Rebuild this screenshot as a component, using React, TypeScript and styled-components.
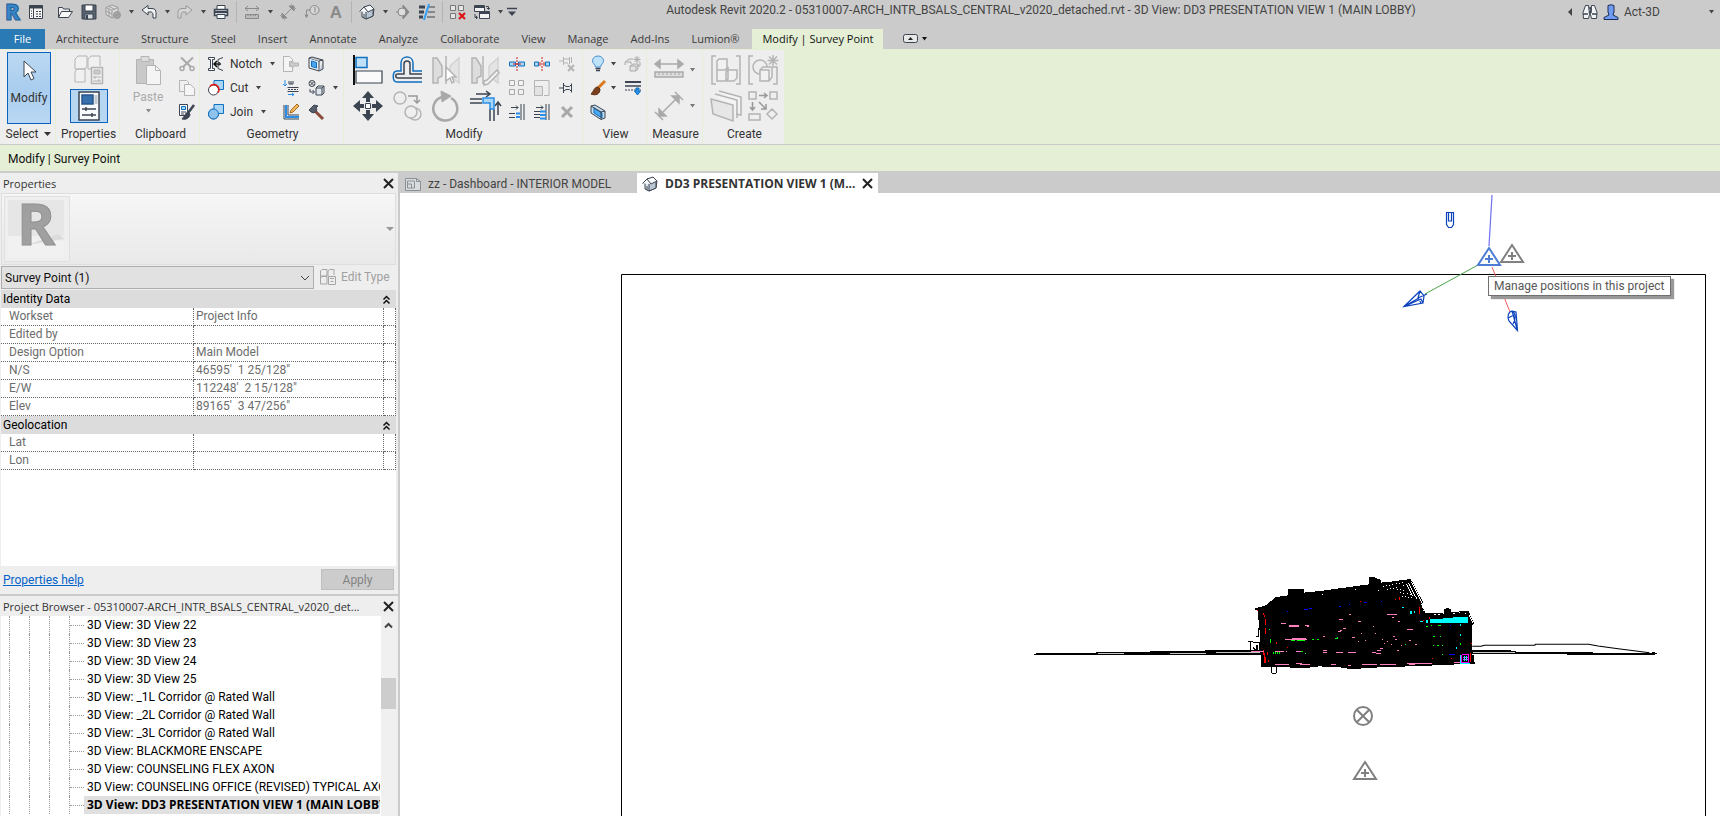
import React, { ReactNode } from 'react';
import styled, { createGlobalStyle, css } from 'styled-components';

const INK = '#3b4450';
const DIM = '#b4b4b4';
const BLUE = '#0f6fc0';
const SKY = '#a9d6f7';

const GlobalStyle = createGlobalStyle`
  * { box-sizing: border-box; }
  body { margin: 0; background: #cbcbcb; font: 12px/18px Roboto, "Open Sans", sans-serif; color: #333; }
  button, select { font: inherit; color: inherit; }
`;

/* ---------- shell ---------- */

const Window = styled.div`
  display: flex;
  flex-direction: column;
  height: 100vh;
  min-height: 640px;
  overflow: hidden;
`;

const TitleBar = styled.header`
  display: flex;
  height: 29px;
  padding-bottom: 5px;
  background: #cbcbcb;
`;

const QuickAccess = styled.nav`
  display: flex;
  align-items: center;
`;

const SlotButton = styled.button<{ $w?: number; $gap?: number }>`
  display: flex;
  align-items: center;
  justify-content: center;
  width: ${(p) => p.$w ?? 24}px;
  height: 24px;
  margin: 0 ${(p) => p.$gap ?? 0}px 0 0;
  padding: 0;
  border: 0;
  background: none;
`;

const Separator = styled.span`
  width: 1px;
  height: 22px;
  margin: 0 3px;
  background: #b3b3b3;
`;

const WindowTitle = styled.h1`
  flex: 1;
  margin: 0;
  font-size: 12px;
  font-weight: 400;
  line-height: 20px;
  text-align: center;
  white-space: nowrap;
  color: #444;
`;

const Account = styled.div`
  display: flex;
  align-items: center;
  width: 156px;
  color: #444;
`;

const UserButton = styled.button`
  display: flex;
  flex: 1;
  align-items: center;
  gap: 5px;
  padding: 0;
  border: 0;
  background: none;
`;

const TabStrip = styled.nav`
  display: flex;
  height: 20px;
  background: #cbcbcb;
  font-family: "Open Sans", sans-serif;
  font-size: 11px;
`;

const RibbonTab = styled.button<{ $kind?: 'file' | 'active' }>`
  padding: 0 11px;
  border: 0;
  background: none;
  white-space: nowrap;
  color: #3a3a3a;
  ${(p) => p.$kind === 'file' && css`
    width: 45px;
    background: #2a7ab5;
    color: #fff;
  `}
  ${(p) => p.$kind === 'active' && css`
    padding: 0 10px;
    margin-left: 2px;
    background: #e4efd5;
    color: #111;
  `}
`;

const RibbonToggle = styled.button`
  display: flex;
  align-items: center;
  gap: 3px;
  margin-left: 20px;
  padding: 0;
  border: 0;
  background: none;
`;

const Ribbon = styled.div`
  display: flex;
  height: 96px;
  padding-top: 1px;
  border-bottom: 1px solid #cbcbcb;
  background: #e4efd5;
`;

const RibbonPanel = styled.section<{ $w: number }>`
  display: flex;
  flex-direction: column;
  width: ${(p) => p.$w}px;
  padding-top: 2px;
  border-right: 1px solid #e4efd5;
  background: #eeeeee;
`;

const PanelBody = styled.div<{ $pad?: number }>`
  display: flex;
  height: 72px;
  padding-left: ${(p) => p.$pad ?? 0}px;
`;

const PanelLabel = styled.div`
  display: flex;
  align-items: center;
  justify-content: center;
  gap: 6px;
  height: 20px;
  padding-left: 2px;
`;

const Stack = styled.div`
  display: flex;
  flex-direction: column;
`;

const GeometryStack = styled(Stack)`
  width: 70px;
`;

const ViewStack = styled(Stack)`
  width: 31px;
`;

const BigGrid = styled.div<{ $cols: number; $cell: number }>`
  display: grid;
  grid-template-columns: repeat(${(p) => p.$cols}, ${(p) => p.$cell}px);
  grid-auto-rows: 36px;
`;

const SmallGrid = styled.div<{ $cols: number }>`
  display: grid;
  grid-template-columns: repeat(${(p) => p.$cols}, 25px);
  grid-auto-rows: 24px;
`;

const ToolButton = styled.button<{ $start?: boolean }>`
  display: flex;
  align-items: center;
  justify-content: ${(p) => (p.$start ? 'flex-start' : 'center')};
  min-width: 24px;
  min-height: 24px;
  padding: 0;
  border: 0;
  background: none;
`;

const MidArrow = styled.button`
  display: flex;
  align-items: center;
  align-self: center;
  margin-left: 5px;
  padding: 0;
  border: 0;
  background: none;
`;

const SelectTool = styled.button`
  display: flex;
  flex-direction: column;
  align-items: center;
  gap: 7px;
  width: 44px;
  height: 72px;
  padding: 7px 0 0;
  border: 1px solid #0a64bd;
  background: linear-gradient(#bcd9f2, #a9cdee 50%, #b9d8f3);
`;

const PropertiesTool = styled.button`
  display: flex;
  align-items: center;
  justify-content: center;
  width: 38px;
  height: 34px;
  padding: 0;
  border: 1px solid #0a64bd;
  background: #b7d6f2;
`;

const TypeTool = styled.button`
  display: flex;
  justify-content: center;
  width: 38px;
  height: 37px;
  padding: 3px 0 0;
  border: 0;
  background: none;
`;

const PasteTool = styled.button`
  display: flex;
  flex-direction: column;
  align-items: center;
  gap: 4px;
  width: 52px;
  padding: 3px 0 0;
  border: 0;
  background: none;
  color: #aaa;
  line-height: 16px;
`;

const TextTool = styled.button`
  display: flex;
  align-items: center;
  gap: 6px;
  height: 24px;
  padding: 0;
  border: 0;
  background: none;
  & > svg:last-child { margin-left: 2px; }
`;

const DropButton = styled.button<{ $tall?: boolean }>`
  display: flex;
  align-items: center;
  gap: ${(p) => (p.$tall ? 6 : 5)}px;
  height: ${(p) => (p.$tall ? 36 : 24)}px;
  padding: 0;
  border: 0;
  background: none;
`;

const OptionsBar = styled.div`
  height: 28px;
  padding-left: 8px;
  border-bottom: 2px solid #cbcbcb;
  background: #e4efd5;
  line-height: 28px;
  color: #111;
`;

const Workspace = styled.div`
  display: flex;
  flex: 1;
  min-height: 0;
`;

/* ---------- side palettes ---------- */

const Sidebar = styled.aside`
  display: flex;
  flex: none;
  flex-direction: column;
  width: 400px;
  border-right: 2px solid #cbcbcb;
  background: #eeeeee;
`;

const PaletteHeader = styled.header`
  display: flex;
  flex: none;
  align-items: center;
  justify-content: space-between;
  height: 20px;
  padding: 1px 4px 0 3px;
  font-family: "Open Sans", sans-serif;
  font-size: 11px;
  white-space: nowrap;
`;

const PaletteTitle = styled.h2`
  margin: 0;
  font: inherit;
  color: #333;
`;

const CloseButton = styled.button`
  display: flex;
  padding: 0;
  border: 0;
  background: none;
`;

const TypePreview = styled.div`
  display: flex;
  align-items: center;
  justify-content: space-between;
  height: 72px;
  margin: 0 2px 0 1px;
  padding: 0 1px 0 2px;
  border: 1px solid #dedede;
  background: linear-gradient(#f6f6f6, #e9e9e9);
`;

const Thumb = styled.div`
  width: 66px;
  height: 66px;
  border: 1px solid #e0e0e0;
  background: #efefef;
`;

const TypeRow = styled.div`
  display: flex;
  align-items: center;
  gap: 6px;
  height: 25px;
  padding: 1px 0 1px 1px;
`;

const SelectWrap = styled.label`
  display: grid;
  align-items: center;
  width: 313px;
  height: 23px;
  & > * { grid-area: 1 / 1; }
  & > svg { justify-self: end; margin-right: 4px; pointer-events: none; }
`;

const TypeSelect = styled.select`
  width: 100%;
  height: 23px;
  padding: 0 3px;
  border: 1px solid #adadad;
  border-radius: 0;
  background: #e1e1e1;
  color: #111;
  appearance: none;
`;

const EditType = styled.button`
  display: flex;
  align-items: center;
  gap: 5px;
  padding: 0 0 2px;
  border: 0;
  background: none;
  color: #a0a0a0;
`;

const PropertyArea = styled.div`
  flex: 1;
  min-height: 0;
  margin: 0 2px 0 1px;
  overflow: hidden;
  background: #fff;
`;

const PropertyTable = styled.table`
  width: 100%;
  border-spacing: 0;
  table-layout: fixed;
  color: #6d6d6d;
`;

const NameCol = styled.col`
  width: 193px;
`;

const GutterCol = styled.col`
  width: 12px;
`;

const cell = css`
  height: 18px;
  border-right: 1px dotted #666;
  border-bottom: 1px dotted #666;
  line-height: 16px;
  vertical-align: top;
  white-space: pre;
`;

const Cell = styled.td`
  ${cell}
  padding: 0 0 0 2px;
`;

const NameCell = styled.th`
  ${cell}
  padding: 0 0 0 8px;
  font-weight: 400;
  text-align: left;
`;

const Category = styled.th`
  height: 18px;
  padding: 0;
  background: #dcdcdc;
  font-weight: 400;
`;

const CategoryToggle = styled.button`
  display: flex;
  align-items: center;
  justify-content: space-between;
  width: 100%;
  height: 18px;
  padding: 0 5px 0 2px;
  border: 0;
  background: none;
  color: #000;
`;

const PaletteFooter = styled.footer`
  display: flex;
  flex: none;
  align-items: center;
  justify-content: space-between;
  height: 30px;
  padding: 0 4px 1px 3px;
  border-bottom: 2px solid #cbcbcb;
`;

const HelpLink = styled.a`
  color: #0563c9;
`;

const ApplyButton = styled.button`
  width: 73px;
  height: 21px;
  padding: 0;
  border: 1px solid #bfbfbf;
  background: #cccccc;
  color: #838383;
`;

const TreeArea = styled.div`
  display: flex;
  flex: none;
  height: 200px;
  margin: 0 2px 0 1px;
`;

const Tree = styled.ul`
  flex: 1;
  min-width: 0;
  margin: 0;
  padding: 0;
  overflow: hidden;
  background: #fff;
  list-style: none;
`;

const TreeRow = styled.li`
  display: flex;
  height: 18px;
  padding-left: 8px;
`;

const Guide = styled.span`
  flex: none;
  width: 20px;
  border-left: 1px dotted #999;
`;

const Branch = styled.span`
  display: flex;
  flex: none;
  align-items: center;
  width: 15px;
  border-left: 1px dotted #999;
  &::before { content: ''; width: 14px; border-top: 1px dotted #999; }
`;

const TreeLabel = styled.span<{ $on?: boolean }>`
  flex: 1;
  min-width: 0;
  margin-right: 1px;
  padding-left: 3px;
  overflow: hidden;
  white-space: nowrap;
  color: #000;
  ${(p) => p.$on && css`
    background: #e0e0e0;
    font-family: "Open Sans", sans-serif;
    font-weight: 700;
  `}
`;

const ScrollTrack = styled.div`
  display: flex;
  flex-direction: column;
  align-items: center;
  width: 15px;
  padding-top: 5px;
  background: #f0f0f0;
`;

const ScrollThumb = styled.div`
  width: 15px;
  height: 31px;
  margin-top: 48px;
  background: #cdcdcd;
`;

/* ---------- drawing area ---------- */

const ViewColumn = styled.main`
  display: flex;
  flex: 1;
  flex-direction: column;
  min-width: 0;
`;

const ViewTabs = styled.nav`
  display: flex;
  flex: none;
  height: 20px;
  background: #cbcbcb;
`;

const ViewTab = styled.div<{ $on?: boolean }>`
  display: flex;
  align-items: center;
  gap: 7px;
  width: ${(p) => (p.$on ? 241 : 237)}px;
  padding: 1px 0 0 5px;
  color: #444;
  white-space: nowrap;
  ${(p) => p.$on && css`
    background: #fff;
    color: #333;
    font-family: "Open Sans", sans-serif;
    font-weight: 700;
  `}
`;

const Canvas = styled.div`
  position: relative;
  flex: 1;
  min-height: 0;
  overflow: hidden;
  background: #fff;
`;

const Scene = styled.svg`
  display: block;
  width: 100%;
  height: 100%;
`;

const Tooltip = styled.div`
  position: absolute;
  top: 83px;
  left: 1088px;
  height: 20px;
  padding: 0 5px;
  border: 1px solid #707070;
  background: #fff;
  box-shadow: 3px 3px 1px #999;
  color: #575757;
  white-space: nowrap;
`;

/* ---------- icons ---------- */

const Glyph = styled.svg`
  display: block;
  flex: none;
  overflow: visible;
`;

const Ico = ({ s = 16, c = INK, w = 1, children }: { s?: number; c?: string; w?: number; children: ReactNode }) => (
  <Glyph width={s} height={s} viewBox={`0 0 ${s} ${s}`} fill="none" stroke={c} strokeWidth={w} aria-hidden="true">
    {children}
  </Glyph>
);

const Arrow = ({ c = '#444' }: { c?: string }) => (
  <Glyph width="5" height="4" viewBox="0 0 5 4" aria-hidden="true"><path d="M0 0h5L2.5 3.5z" fill={c} /></Glyph>
);

const Cross = () => (
  <Ico s={11} c="#222" w={2}><path d="M1 1l9 9M10 1l-9 9" /></Ico>
);

const Chevrons = () => (
  <Ico s={9} c="#111" w={1.5}><path d="M1.5 4.5l3-3 3 3M1.5 8.5l3-3 3 3" /></Ico>
);

const House = () => (
  <Ico>
    <path d="M1 7l4-4 7-1 3 3-1 7-7 3-4-2V7z" fill="#dfe6ee" />
    <path d="M7 7l7-2v7l-7 3z" fill="#b9c6d4" />
    <path d="M.5 7.5L5 3l4 5M5 3l6-2 4 4-6 3" fill="#f6f8fa" />
    <path d="M5 14v-4" />
  </Ico>
);

const I = {
  menu: <Ico><path d="M1.5 1.5h13v13h-13z" fill="#f4f4f4" /><path d="M1.500 3h13" strokeWidth="3" /><path d="M5.500 4v10M3 7h1M3 9.500h1M3 12h1M8 7.500h2M11 7.500h2M8 10h2M11 10h2M8 12.500h2M11 12.500h2" /></Ico>,
  open: <Ico><path d="M1.500 13V3.500h4l1 1.500h6v2.500" fill="#eee" /><path d="M1.500 13.500l3-6h11l-4 6z" fill="#f8f8f8" /></Ico>,
  save: <Ico><path d="M1 1h14v14H1z" fill="#59636f" /><path d="M4 1h8v6H4z" fill="#fff" /><path d="M4 10h8v5H4z" fill="#d8dde2" /><path d="M6 11v4" strokeWidth="2" /></Ico>,
  sync: <Ico c="#999"><path d="M7 1l6 2.500v7L7 14l-6-3.500v-7z" fill="#ddd" /><path d="M1 3.500L7 6.500l6-3M7 6.500V14M4 2.500l6 3M4 5v7M1 7l6 3" /><circle cx="12" cy="11" r="3.500" fill="#a4a4a4" /><path d="M9 12l6-2" /></Ico>,
  undo: <Ico><path d="M1 6l6-4.500v3h4c3 0 4 2 4 4V14h-3v-3c0-2-1-3-2-3H7v3z" fill="#f0f2f4" /></Ico>,
  redo: <Ico c="#999"><path d="M15 6L9 1.500v3H5C2 4.500 1 6.500 1 8.500V14h3v-3c0-2 1-3 2-3h3v3z" fill="#d6d6d6" /></Ico>,
  print: <Ico><path d="M4 6V1.500h8V6" fill="#fff" /><path d="M1.500 5.500h13v6h-13z" fill="#cfd5dc" strokeWidth="1.500" /><path d="M1 8h14" strokeWidth="2" /><path d="M4 10.500h8v4H4z" fill="#f4fbff" /></Ico>,
  measure: <Ico c="#8a8a8a"><path d="M1 4.500h14M4 2L1 4.500 4 7M12 2l3 2.500L12 7" /><path d="M1.500 10.500h13v4h-13z" fill="#bbb" /><path d="M4 10v2M6.500 10v2M9 10v2M11.500 10v2" /></Ico>,
  dim: <Ico c="#8a8a8a"><path d="M3 13L13 3" /><path d="M2 9v5h5zM9 2h5v5z" fill="#8a8a8a" /><path d="M0 11l5 5M11 0l5 5" strokeDasharray="1 1" /></Ico>,
  tag: <Ico c="#8a8a8a"><circle cx="10.500" cy="6" r="4.500" fill="#d6d6d6" /><path d="M6 6H2.500v7M1 10.500l1.500 3L4 10.500M10 4l1-.5V8.500" /></Ico>,
  letter: <Ico><text x="8" y="14" textAnchor="middle" fontFamily="Liberation Sans, sans-serif" fontWeight="700" fontSize="17" fill="#8a8a8a" stroke="none">A</text></Ico>,
  section: <Ico c="#888"><path d="M8 1l6 7-6 7z" fill="#888" /><circle cx="7" cy="8" r="4" fill="#ddd" /><path d="M1 8h2" /></Ico>,
  thin: <Ico w={2}><path d="M0 3h6M0 8h5M0 13h4" strokeWidth="3" /><path d="M10 3h6M9 8h7M8 13h8" strokeWidth="1" /><path d="M10 0L5 16" stroke="#35a0f4" /></Ico>,
  closeHidden: <Ico c="#777"><path d="M.5 1.500h5v5h-5zM8.500 1.500h5v5h-5zM.5 9.500h5v5h-5z" fill="#e6e6e6" /><path d="M9 9l6 6M15 9l-6 6" stroke="#d11" strokeWidth="2" /></Ico>,
  switch: <Ico><path d="M.5 1.500h10v6H.5zM5.500 7.500h10v7h-10z" fill="#f2f2f2" /><path d="M.5 3h10M5.500 9h10" strokeWidth="2" /><path d="M12 2.500h2.500V5M13 4l1.500 1.500L16 4M1 10v3.500h2.500M2 12l1.500 1.500L2 15" /></Ico>,
  customize: <Ico s={10}><path d="M0 1.500h10" strokeWidth="1.500" /><path d="M1 4.500h8L5 9z" fill={INK} stroke="none" /></Ico>,
  cursor: <Ico s={22}><path d="M6 1v16l4-4 3 7 3-1.500-3-6.500h5z" fill="#fff" /></Ico>,
  types: <Ico s={30} c={DIM}><path d="M1 14V4l3-3h9v10l-2 3zM14 14V4l3-3h9v10M1 27V17l2-3h9M1 27h10V15M14 14h8" fill="#f1f1f1" /><path d="M17.500 12.500h11v16h-11z" fill="#eee" strokeWidth="1.500" /><path d="M20 15h6v4h-6z" fill="#ccc" /><path d="M19 22h8M21 21v3M19 26h8M25 24v3" /></Ico>,
  props: <Ico s={30} w={1.5}><path d="M5 1h20v28H5z" fill="#f8fafc" /><path d="M8 4h11v9H8z" fill="#3670ad" stroke="#27558a" /><path d="M22 4v9" stroke="#c3cad2" strokeWidth="3" /><path d="M8 18h14M8 24h14M12 16v4M18 22v4" /></Ico>,
  paste: <Ico s={30} c={DIM}><path d="M3.500 4.500h17v24h-17z" fill="#c9c9c9" /><path d="M8 1.500h8v5H8z" fill="#ddd" /><path d="M13.500 10.500h9l5 5v14h-14z" fill="#f4f4f4" /><path d="M22.500 10.500v5h5" /></Ico>,
  cutClip: <Ico c="#aaa" w={1.5}><path d="M2 1.500l10 9.500M14 1.500L4 11" strokeWidth="2" /><circle cx="3" cy="12.500" r="2" /><circle cx="13" cy="12.500" r="2" /></Ico>,
  copyClip: <Ico c={DIM}><path d="M.5 .5h7l2 2v9h-9z" fill="#f0f0f0" /><path d="M5.500 4.500h6l4 4v7h-10z" fill="#f6f6f6" /></Ico>,
  match: <Ico><path d="M.5 .5h8v11h-8z" fill="#fff" /><path d="M2.500 2.500h4v3h-4z" stroke={BLUE} fill={SKY} /><path d="M2 8h5M2 10h3" /><path d="M15 1L9 9" strokeWidth="2.500" /><path d="M9 8c-3 1-3 4-6 7 4 1 8-1 8-5z" fill={INK} /></Ico>,
  notch: <Ico><path d="M.5 1.500h6v2h-2v9h2v2h-6v-2h2v-9h-2z" fill="#fff" /><path d="M15 1.500l-5 2v3h2M15 14.500l-5-2V9h2" /><path d="M13 8H6M9 5L6 8l3 3" strokeWidth="1.500" stroke="#111" /></Ico>,
  cut: <Ico><path d="M6 .5h9.500v9H6z" fill={SKY} stroke={BLUE} /><circle cx="5.500" cy="10" r="5" fill="#fff" /><path d="M2 6.500a5 5 0 0 1 8 6" stroke="#e11" strokeWidth="1.500" /></Ico>,
  join: <Ico c={BLUE}><path d="M6 .5h9.500v9h-5a5 5 0 1 1-5-4.500H6z" fill={SKY} /><circle cx="5.500" cy="10" r="5" fill="#8fc3ee" /></Ico>,
  cope: <Ico c={DIM}><path d="M.5 .5h6l3 3v2h-3v5h3v5h-9z" fill="#f4f4f4" /><path d="M6 8l4-3v2h5.500v3H10v2z" fill="#ccc" /></Ico>,
  wall: <Ico><path d="M2 0v6M0 4l2 2 2-2" stroke="#2a8ee6" /><path d="M6 1v3h4V1M8 1v3" /><path d="M4.500 7.500h11M4.500 11.500h11" /><path d="M5 9.500h10" strokeDasharray="2 1" /><path d="M5 14.500h6M9 13l2 1.500L9 16" stroke="#2a8ee6" /></Ico>,
  beam: <Ico><path d="M1 1v14h15M5 1v10h11" /><path d="M3 1v12h13" stroke="#2a8ee6" strokeWidth="2" /><path d="M14 0L8 6 7 9l3-1 6-6z" fill="#f2b75a" stroke="#a8681b" /></Ico>,
  opening: <Ico><path d="M1 2l10 3v10L1 12z" fill="#e9eef3" /><path d="M1 2l3-1 11 3-4 1M15 4v9l-4 2" fill="#c8d1da" /><path d="M3.500 5l5 1.500v5.500l-5-1.500z" fill="#4aa7ee" stroke={BLUE} /></Ico>,
  split: <Ico><circle cx="4" cy="3.500" r="3" /><path d="M2 1.500l4 4M6 1.500l-4 4M2 9v3h4M4.500 10L6.500 12l-2 2" /><path d="M8 8l2-2h6v7l-2 2H8zM8 8h6v7M14 8l2-2" fill="#dfe6ed" /></Ico>,
  hammer: <Ico><path d="M6 6l9 9" strokeWidth="3" stroke="#8a4b3a" /><path d="M1 6l5-5 4 1-2 2 1 2-3 3-3-1z" fill="#55606c" /></Ico>,
  align: <Ico s={30}><path d="M1 0v30" strokeWidth="2" stroke="#111" /><path d="M3 2.500h11v10H3z" fill="#bfe0f8" stroke={BLUE} strokeWidth="1.500" /><path d="M3 16h26v12H3z" fill="#fafafa" strokeWidth="1.200" /></Ico>,
  offset: <Ico s={30} w={1.5}><path d="M30 27H5c-5 0-5-11 0-11h4V8c0-8 12-8 12 0v8h9" stroke={BLUE} /><path d="M30 23H6c-3 0-3-4 0-4h6V9c0-4 6-4 6 0v10h12" /></Ico>,
  mirrorPick: <Ico s={30} c={DIM} w={1.5}><path d="M2 3h4l5 8v10l-4 2v5H2z" fill="#ddd" /><path d="M28 3l-9 8v10l9 7z" fill="#e4e4e4" stroke="#d2d2d2" /><path d="M15 1v28" /><path d="M15 12v14l4-3 2 5 2-1-2-5h4z" fill="#fff" /></Ico>,
  mirrorDraw: <Ico s={30} c={DIM} w={1.5}><path d="M2 3h4l5 8v10l-4 2v5H2z" fill="#ddd" /><path d="M28 3l-9 8v10l9 7z" fill="#e4e4e4" stroke="#d2d2d2" /><path d="M13 1v28" /><path d="M27 15L17 25l-3 1v4l4-1L29 18z" fill="#f2f2f2" /></Ico>,
  move: <Ico s={30}><path d="M15 0l6 7h-4v4h-4V7H9zM15 30l6-7h-4v-4h-4v4H9zM0 15l7-6v4h4v4H7v4zM30 15l-7-6v4h-4v4h4v4z" fill={INK} stroke="none" /><path d="M12.500 12.500h5v5h-5z" fill="#fff" /></Ico>,
  copy: <Ico s={30} c={DIM} w={1.5}><circle cx="8" cy="7" r="6" /><circle cx="23" cy="23" r="6" /><circle cx="19" cy="21" r="6" fill="#efefef" /><path d="M16 5h9v7M22 9l3 3 3-3" stroke="#999" /></Ico>,
  rotate: <Ico s={30} c="#a9a9a9" w={2.5}><path d="M20 7a12 12 0 1 1-9-1" /><path d="M10 0l10 5-9 6z" fill="#a9a9a9" strokeWidth="1" /></Ico>,
  trim: <Ico s={30} w={1.5}><path d="M0 8h12M0 12h12M20 18v12M24 18v12M6 3h13M16 0l4 3-4 3M28 24V12M25 15l3-4 3 4" /><path d="M13 7h11v11h-4v-6h-7z" fill={SKY} stroke="#2a8ee6" /></Ico>,
  splitEl: <Ico><path d="M.5 6h6v4h-6zM9.500 6h6v4h-6z" fill={SKY} stroke={BLUE} /><path d="M8 1v14" stroke="#c22" strokeDasharray="2 1" /><path d="M4 8h8" stroke="#c22" /></Ico>,
  splitGap: <Ico><path d="M.5 6h4v4h-4zM11.500 6h4v4h-4z" fill={SKY} stroke={BLUE} /><path d="M8 1v14" stroke="#c22" strokeDasharray="2 1" /><path d="M6 6v4M10 6v4" stroke="#c22" /></Ico>,
  unpin: <Ico c={DIM}><path d="M0 5h4M4.500 1v8M4.500 3H10M4.500 7H9M10.500 1v7M12.500 1v6" /><path d="M9 9l6 6M15 9l-6 6" strokeWidth="2" /></Ico>,
  array: <Ico c="#a6a6a6"><path d="M.5 .5h5v5h-5zM9.500 .5h5v5h-5zM.5 9.500h5v5h-5zM9.500 9.500h5v5h-5z" fill="#f2f2f2" /></Ico>,
  scale: <Ico c={DIM}><path d="M.5 15V.5H15v15H10" fill="#efefef" /><path d="M.5 6.500h8v9h-8z" fill="#e2e2e2" /></Ico>,
  pin: <Ico><path d="M0 8h4M4.500 3v10M5 5l2 1.500h3.500l2-2M5 11l2-1.500h3.500l2 2M12.500 3.500v9" /></Ico>,
  trimOne: <Ico><path d="M0 9.500h6M0 13.500h6M15 0v16M12 0v16M2 3.500h7M7 1.500l2 2-2 2" /><path d="M7 9.500h4M7 13h4" stroke="#2a8ee6" strokeWidth="2" /></Ico>,
  trimMulti: <Ico><path d="M0 7.500h6M0 10.500h6M0 13.500h6M15 0v16M12 0v16M2 3.500h7M7 1.500l2 2-2 2" /><path d="M6 7.500h6M6 11h6M6 14.500h6" stroke="#2a8ee6" strokeWidth="2" /></Ico>,
  del: <Ico c="#a8a8a8" w={3}><path d="M3 3l10 10M13 3L3 13" /></Ico>,
  bulb: <Ico><path d="M5.500 11C5 8 2.500 7.500 2.500 4.800a5.500 4.800 0 0 1 11 0C13.500 7.500 11 8 10.500 11z" fill="#bfe2fb" stroke="#4a8fd0" /><path d="M5.500 12.500h5M6 14.500h4" strokeWidth="1.500" /></Ico>,
  displace: <Ico c="#aaa"><path d="M5 10l3-2h5v5l-2 2H5zM5 10h6v5M0 9V6l4-3h4M1 6h5v2M12 10h3V6" fill="#e4e4e4" /><path d="M12 0v7M8.500 3.500h7M9.500 1l5 5M14.500 1l-5 5" /></Ico>,
  brush: <Ico><path d="M15 1L8 8" stroke="#d9791b" strokeWidth="3" /><path d="M8 7c-4 0-4 4-7 7 5 2 9 0 9-5z" fill="#7a3f1d" stroke="#5b2d12" /></Ico>,
  lines: <Ico><path d="M0 2h16" strokeWidth="2" /><path d="M0 6h16" strokeWidth="1.500" /><path d="M0 10h16" strokeDasharray="2 1" /><path d="M11 8h3v3h1.500l-3 4L9.500 11H11z" fill="#2a8ee6" stroke={BLUE} /></Ico>,
  box: <Ico><path d="M1 2l4-1 10 6v7l-4 1.500L1 9z" fill="#c5dcf0" /><path d="M4 4l8 5v5L4 9z" fill="#4aa7ee" stroke={BLUE} /><path d="M1 2l10 6v7M11 8l4-1" /></Ico>,
  bigMeasure: <Ico s={30} c="#aaa" w={1.5}><path d="M2 9h26M6 5L1 9l5 4zM24 5l5 4-5 4z" fill="#aaa" /><path d="M1 17h28v5H1z" fill="#ddd" /><path d="M5 17v3M9 17v3M13 17v3M17 17v3M21 17v3M25 17v3" strokeWidth="1" /></Ico>,
  bigDim: <Ico s={30} c="#aaa" w={1.5}><path d="M6 24L24 6M5 18v7h7zM18 5h7v7z" fill="#aaa" /><path d="M1 21l8 8M21 1l8 8" /></Ico>,
  assembly: <Ico s={30} c={DIM} w={1.5}><path d="M5 1H1v28h4M25 1h4v28h-4" /><path d="M6 6l2-2h8v9l-2 2H6zM6 15h9l2-2v11l-2 2H6zM15 17l3-2h8v8l-3 3h-8z" fill="#f1f1f1" /></Ico>,
  similar: <Ico s={30} c={DIM} w={1.5}><path d="M5 1H1v28h4M25 12h4v17h-4" /><circle cx="12" cy="12" r="7" /><path d="M12 15l3-3h9v10l-3 4h-9zM12 15h9v11" fill="#f1f1f1" /><path d="M25 0v11M19.500 5.500h11M21 1.500l8 8M29 1.500l-8 8" /></Ico>,
  parts: <Ico s={32} c={DIM} w={1.5}><path d="M9 1l22 6v18l-5-1M5 4l22 6v18" fill="#f3f3f3" /><path d="M1 9l22 6v16L3 24z" fill="#e6e6e6" /></Ico>,
  group: <Ico s={30} c={DIM} w={1.5}><path d="M1 1h7v7H1zM22 1h7v7h-7zM1 23h11v6H1zM24 18l5 5-5 5-5-5z" fill="#efefef" /><path d="M11 4.500h8M16 2l3 2.500L16 7M4.500 11v8M2 16l2.500 3L7 16M11 11l7 7M18 13v5h-5" stroke="#999" /></Ico>,
  binoculars: <Ico><path d="M3.500 1.500h3l1 9-1 4h-5l-.5-6zM12.500 1.500h-3l-1 9 1 4h5l.5-6z" fill="#f2f4f6" /><path d="M7 4h2v4H7M1 10h5M10 10h5" strokeWidth="1.500" /></Ico>,
  user: <Ico c="#1d2b55"><path d="M5 1.500q3-1.500 6 0V8L10 11l5 2.500v2H1v-2L6 11 5 8z" fill="#6f9bf2" /></Ico>,
  sheet: <Ico c="#8a9096"><path d="M.5 2.500h11l4 3v9H.5z" fill="#d9dcde" /><path d="M2.500 5h7v7h-7zM2.500 8h4v4M11.500 2.500v3h4" /></Ico>,
  scrollUp: <Ico s={9} c="#444" w={2}><path d="M1 6.500L4.500 3 8 6.500" /></Ico>,
};

type Quick = { n: string; i: ReactNode; arrow?: boolean; sep?: boolean };
const QUICK: Quick[] = [
  { n: 'Open', i: I.open }, { n: 'Save', i: I.save }, { n: 'Synchronize', i: I.sync, arrow: true },
  { n: 'Undo', i: I.undo, arrow: true }, { n: 'Redo', i: I.redo, arrow: true }, { n: 'Print', i: I.print, sep: true },
  { n: 'Measure', i: I.measure, arrow: true }, { n: 'Aligned dimension', i: I.dim }, { n: 'Tag', i: I.tag },
  { n: 'Text', i: I.letter, sep: true }, { n: 'Default 3D view', i: <House />, arrow: true }, { n: 'Section', i: I.section },
  { n: 'Thin lines', i: I.thin, sep: true }, { n: 'Close inactive', i: I.closeHidden }, { n: 'Switch windows', i: I.switch, arrow: true },
];

const TABS = ['Architecture', 'Structure', 'Steel', 'Insert', 'Annotate', 'Analyze', 'Collaborate', 'View', 'Manage', 'Add-Ins', 'Lumion®'];

const IDENTITY: [string, string][] = [
  ['Workset', 'Project Info'], ['Edited by', ''], ['Design Option', 'Main Model'],
  ['N/S', '46595\'  1 25/128"'], ['E/W', '112248\'  2 15/128"'], ['Elev', '89165\'  3 47/256"'],
];
const GEO: [string, string][] = [['Lat', ''], ['Lon', '']];

const VIEWS = [
  '3D View 22', '3D View 23', '3D View 24', '3D View 25', '_1L Corridor @ Rated Wall', '_2L Corridor @ Rated Wall',
  '_3L Corridor @ Rated Wall', 'BLACKMORE ENSCAPE', 'COUNSELING FLEX AXON', 'COUNSELING OFFICE (REVISED) TYPICAL AXON',
  'DD3 PRESENTATION VIEW 1 (MAIN LOBBY)',
];

const Tool = ({ n, children }: { n: string; children: ReactNode }) => <ToolButton aria-label={n}>{children}</ToolButton>;

const DropTool = ({ n, children, tall }: { n: string; children: ReactNode; tall?: boolean }) => (
  <DropButton aria-label={n} $tall={tall}>{children}<Arrow c={tall ? '#777' : undefined} /></DropButton>
);

const Group = ({ title, rows }: { title: string; rows: [string, string][] }) => (
  <tbody>
    <tr><Category colSpan={3}><CategoryToggle>{title}<Chevrons /></CategoryToggle></Category></tr>
    {rows.map(([k, v]) => (
      <tr key={k}><NameCell scope="row">{k}</NameCell><Cell>{v}</Cell><Cell /></tr>
    ))}
  </tbody>
);

const Survey = ({ x, y, c }: { x: number; y: number; c: string }) => (
  <g transform={`translate(${x} ${y})`} fill="none" stroke={c} strokeWidth="2">
    <path d="M0 1L11 18H-11z" /><path d="M-4 12H4M0 8v8" />
  </g>
);

/* elevation of the linked building, drawn at three units to the pixel */
const Building = () => (
  <g transform="translate(1220 560) scale(.3333)" shapeRendering="crispEdges" fill="none" strokeWidth="3">
    <path fill="#000" d="M104 146L140 135 165 112 205 106V88H251V98L300 93 447 73V52H465L482 60V68L520 64 572 57 610 128 604 134 617 160 672 158V147L682 144 693 147V156L745 153 763 190 757 197V285H764V312H735L650 316 545 320 430 324 420 326H385L360 322H330L300 319 250 325H213L205 320H124V290L118 270V232H108V228H113V150H104z" />
    <path stroke="#000" strokeWidth="5" d="M85 245H98M92 245V272M98 248H118M98 262l10 8M112 256V272" />
    <path stroke="#000" d="M155 320V340H169V320M760 312V285" />
    <path stroke="#fff" d="M112 155V180M115 180V205M119 210V245M121 290V312M764 286V306M566 70L590 116M574 66L606 128M560 74L578 108M748 165L758 188M642 163h6M655 163h5M668 160h3M700 160h4M716 158h3M736 160h3" />
    <path stroke="#fff" strokeDasharray="3 7" d="M488 80L556 66M500 90L560 74M520 86L562 92M540 98L576 104M545 108L585 116M306 105h6M404 90h5M474 92h3M606 140L614 158" />
    <path stroke="#f00" d="M112 150v3M130 158v8M133 165v5M136 176v20M136 205v16M130 270v14M133 278v32M137 290v20M142 276v8M171 246v5M203 262v3M538 111v9M527 116v3M421 123v3M598 141v20M612 180v4M628 172v4M638 294v4M696 294v4M754 248v4M751 280v26M146 300v5" />
    <path stroke="#ff7fbf" d="M183 190h14M207 196h30M207 199h30M255 196h12M262 199h4M195 238h66M216 235h42M310 229h5M354 216h10M360 211h6M370 207h7M386 164h7M414 184h8M356 178h12M500 164h32M516 172h6M534 185h5M560 208h20M397 234h8M424 222h3M458 200h4M464 220h4M434 241h5M413 246h4M487 240h3M520 229h4M526 239h6M492 251h3M512 254h3M543 256h4M566 241h6M586 254h5M93 274h40M165 274h26M198 274h4M228 274h15M309 271h12M308 277h12M348 277h20M384 277h24M455 277h14M470 272h12M468 280h14M480 266h10M500 244h4M530 272h8M165 314h42M228 310h18M240 313h30M334 314h14M384 316h8M426 314h45M480 314h48M561 310h74M566 313h20M702 307h18" />
    <path stroke="#0f0" d="M148 208h3M152 236v14M150 240h3M212 241h14M230 241h26M276 238h5M292 238h5M345 236h8M350 233h3M162 275v6M168 275v6M174 275v6M180 275v6M243 276h6M254 282h4M554 254h3M618 201h6M632 198h4M654 198h8M640 229h5M660 229h3M640 257h3M652 257h5M666 257h4M668 281v5M722 250v6" />
    <path stroke="#00f" d="M202 154h3M253 148h10M267 145h10M358 139h6M386 133h5M431 127h10M483 124h4M690 196h3M688 283h17" />
    <path fill="#0ff" d="M630 178H670V175H700V172H744V188H630zM618 181h6v7h-6zM600 183h9v4h-9zM570 152h6v9h-6zM582 153h4v7h-4zM546 141h6v4h-6zM720 192h3v5h-3zM720 222h3v6h-3zM708 262h3v5h-3z" />
    <path stroke="#f0f" d="M725 284H747V308H725zM729 292H743M729 300H743" /><path stroke="#0ff" d="M721 284V310H749M733 288V304M739 288V304" />
  </g>
);

const Model = () => (
  <Scene viewBox="400 193 1320 623" preserveAspectRatio="xMinYMin slice" role="img" aria-label="3D view of the building">
    <path d="M621.5 820V274.5H1705.5V820" fill="none" stroke="#000" />
    <g transform="translate(1020 600) scale(.4464 .3333)" shapeRendering="crispEdges">
      <path d="M32 161V165H545V150H420L410 153H296L286 156H175L165 159H52z" />
      <path d="M1013 150H1088L1112 153V155H1198L1300 158H1415V156L1428 159V161L1420 165H1300L1198 163H1013z" />
      <path fill="none" stroke="#fff" strokeWidth="2" d="M175 161H233M336 160H417M438 158H538M1015 158H1108" />
      <path fill="none" stroke="#000" strokeWidth="3" d="M1013 139H1033L1040 136H1153L1155 133H1274L1295 138 1340 146 1380 153 1410 158" />
    </g>
    <Building />
    <path d="M1492 195L1489 246" stroke="#7070f4" fill="none" strokeWidth="1.2" />
    <path d="M1478 265L1425 294" stroke="#4aa54a" fill="none" />
    <path d="M1492 267L1510 312" stroke="#f25a5a" fill="none" />
    <Survey x={1512} y={244} c="#808080" />
    <Survey x={1489} y={247} c="#4d7dd2" />
    <Survey x={1365} y={761} c="#808080" />
    <g fill="none" stroke="#808080" strokeWidth="2"><circle cx="1363" cy="716" r="9" /><path d="M1357 710l12 12M1369 710l-12 12" /></g>
    <g fill="none" stroke="#0c43bd" strokeWidth="1.2">
      <path d="M1451.5 213v8h-3v-8.500M1446.500 212.500h7v12l-2 3h-3l-2-3z" />
      <path d="M1404 306.500L1420 291l4 5-1 7zM1404 306.500L1421 299l2 4M1420 291l-2 7 3 5M1418 298l9-4M1404 306.500l14-8" />
      <path d="M1517.500 330.500L1509 321c-2-4-1-9 3-10l4 1zM1512 311c4 2 4 9 1 13M1512 311l5.500 19.500M1508 318l6-3" />
    </g>
  </Scene>
);

export default function App() {
  return (
    <Window>
      <GlobalStyle />
      <TitleBar>
        <QuickAccess aria-label="Quick access">
          <SlotButton aria-label="Application menu">
            <Ico s={18}>
              <text x="2" y="17" fontFamily="Open Sans, sans-serif" fontWeight="800" fontSize="22" fill="#3784c6" stroke="#1f5f9c">R</text>
            </Ico>
          </SlotButton>
          <SlotButton aria-label="Home" $gap={5}>{I.menu}</SlotButton>
          {QUICK.map((q) => (
            <React.Fragment key={q.n}>
              <SlotButton aria-label={q.n}>{q.i}</SlotButton>
              {q.arrow && <SlotButton $w={12} aria-label={`${q.n} options`}><Arrow /></SlotButton>}
              {q.sep && <Separator />}
            </React.Fragment>
          ))}
          <SlotButton $w={12} aria-label="Customize toolbar">{I.customize}</SlotButton>
        </QuickAccess>
        <WindowTitle>Autodesk Revit 2020.2 - 05310007-ARCH_INTR_BSALS_CENTRAL_v2020_detached.rvt - 3D View: DD3 PRESENTATION VIEW 1 (MAIN LOBBY)</WindowTitle>
        <Account>
          <SlotButton $w={12} aria-label="Collapse search"><Ico s={8}><path d="M6 0v8L2 4z" fill="#444" stroke="none" /></Ico></SlotButton>
          <SlotButton $w={27} aria-label="Search">{I.binoculars}</SlotButton>
          <UserButton>{I.user}Act-3D</UserButton>
          <SlotButton $w={18} aria-label="Account options"><Arrow /></SlotButton>
        </Account>
      </TitleBar>

      <TabStrip aria-label="Ribbon tabs">
        <RibbonTab $kind="file">File</RibbonTab>
        {TABS.map((t) => <RibbonTab key={t}>{t}</RibbonTab>)}
        <RibbonTab $kind="active">Modify | Survey Point</RibbonTab>
        <RibbonToggle aria-label="Minimize ribbon">
          <Glyph width="16" height="10" viewBox="0 0 16 10" aria-hidden="true">
            <rect x=".5" y=".5" width="14" height="8" rx="2" fill="#e8e8e8" stroke={INK} /><path d="M5 6h5L7.5 3z" fill="#222" />
          </Glyph>
          <Arrow c="#111" />
        </RibbonToggle>
      </TabStrip>

      <Ribbon>
        <RibbonPanel $w={56}>
          <PanelBody $pad={7}><SelectTool>{I.cursor}Modify</SelectTool></PanelBody>
          <PanelLabel>Select <Glyph width="7" height="4" viewBox="0 0 7 4" aria-hidden="true"><path d="M0 0h7L3.5 4z" fill="#333" /></Glyph></PanelLabel>
        </RibbonPanel>
        <RibbonPanel $w={64}>
          <PanelBody $pad={14}>
            <Stack>
              <TypeTool aria-label="Type properties">{I.types}</TypeTool>
              <PropertiesTool aria-label="Properties">{I.props}</PropertiesTool>
            </Stack>
          </PanelBody>
          <PanelLabel>Properties</PanelLabel>
        </RibbonPanel>
        <RibbonPanel $w={80}>
          <PanelBody $pad={2}>
            <PasteTool>{I.paste}<span>Paste</span><Arrow c="#888" /></PasteTool>
            <SmallGrid $cols={1}>
              <Tool n="Cut to clipboard">{I.cutClip}</Tool>
              <Tool n="Copy to clipboard">{I.copyClip}</Tool>
              <Tool n="Match type">{I.match}</Tool>
            </SmallGrid>
          </PanelBody>
          <PanelLabel>Clipboard</PanelLabel>
        </RibbonPanel>
        <RibbonPanel $w={144}>
          <PanelBody $pad={8}>
            <GeometryStack>
              <TextTool>{I.notch}Notch<Arrow /></TextTool>
              <TextTool>{I.cut}Cut<Arrow /></TextTool>
              <TextTool>{I.join}Join<Arrow /></TextTool>
            </GeometryStack>
            <SmallGrid $cols={2}>
              <Tool n="Cope">{I.cope}</Tool><Tool n="Wall opening">{I.opening}</Tool>
              <Tool n="Wall joins">{I.wall}</Tool><Tool n="Split face">{I.split}</Tool>
              <Tool n="Beam joins">{I.beam}</Tool><Tool n="Demolish">{I.hammer}</Tool>
            </SmallGrid>
            <MidArrow aria-label="Split options"><Arrow /></MidArrow>
          </PanelBody>
          <PanelLabel>Geometry</PanelLabel>
        </RibbonPanel>
        <RibbonPanel $w={239}>
          <PanelBody $pad={4}>
            <BigGrid $cols={4} $cell={39}>
              <Tool n="Align">{I.align}</Tool><Tool n="Offset">{I.offset}</Tool>
              <Tool n="Mirror, pick axis">{I.mirrorPick}</Tool><Tool n="Mirror, draw axis">{I.mirrorDraw}</Tool>
              <Tool n="Move">{I.move}</Tool><Tool n="Copy">{I.copy}</Tool>
              <Tool n="Rotate">{I.rotate}</Tool><Tool n="Trim to corner">{I.trim}</Tool>
            </BigGrid>
            <SmallGrid $cols={3}>
              <Tool n="Split element">{I.splitEl}</Tool><Tool n="Split with gap">{I.splitGap}</Tool><Tool n="Unpin">{I.unpin}</Tool>
              <Tool n="Array">{I.array}</Tool><Tool n="Scale">{I.scale}</Tool><Tool n="Pin">{I.pin}</Tool>
              <Tool n="Trim single">{I.trimOne}</Tool><Tool n="Trim multiple">{I.trimMulti}</Tool><Tool n="Delete">{I.del}</Tool>
            </SmallGrid>
          </PanelBody>
          <PanelLabel>Modify</PanelLabel>
        </RibbonPanel>
        <RibbonPanel $w={64}>
          <PanelBody $pad={7}>
            <ViewStack>
              <DropTool n="Hide in view">{I.bulb}</DropTool>
              <DropTool n="Override graphics">{I.brush}</DropTool>
              <ToolButton $start aria-label="Selection box">{I.box}</ToolButton>
            </ViewStack>
            <Stack>
              <Tool n="Displace">{I.displace}</Tool>
              <Tool n="Linework">{I.lines}</Tool>
            </Stack>
          </PanelBody>
          <PanelLabel>View</PanelLabel>
        </RibbonPanel>
        <RibbonPanel $w={56}>
          <PanelBody $pad={7}>
            <Stack>
              <DropTool tall n="Measure">{I.bigMeasure}</DropTool>
              <DropTool tall n="Dimension">{I.bigDim}</DropTool>
            </Stack>
          </PanelBody>
          <PanelLabel>Measure</PanelLabel>
        </RibbonPanel>
        <RibbonPanel $w={82}>
          <PanelBody $pad={4}>
            <BigGrid $cols={2} $cell={37}>
              <Tool n="Create assembly">{I.assembly}</Tool><Tool n="Create similar">{I.similar}</Tool>
              <Tool n="Create parts">{I.parts}</Tool><Tool n="Create group">{I.group}</Tool>
            </BigGrid>
          </PanelBody>
          <PanelLabel>Create</PanelLabel>
        </RibbonPanel>
      </Ribbon>
      <OptionsBar>Modify | Survey Point</OptionsBar>

      <Workspace>
        <Sidebar>
          <PaletteHeader>
            <PaletteTitle>Properties</PaletteTitle>
            <CloseButton aria-label="Close properties"><Cross /></CloseButton>
          </PaletteHeader>
          <TypePreview>
            <Thumb>
              <Glyph width="64" height="64" viewBox="0 0 64 64" aria-hidden="true">
                <path d="M3 3h56v36H3z" fill="#e6e6e6" /><path d="M3 39l56 5v16H3z" fill="#f1f1f1" />
                <path d="M22 48l38-6-7-5z" fill="#dcdcdc" />
                <text x="12" y="48" fontFamily="Open Sans, sans-serif" fontWeight="700" fontSize="58" fill="#a0a0a0" stroke="#8f8f8f">R</text>
              </Glyph>
            </Thumb>
            <Glyph width="8" height="4" viewBox="0 0 8 4" aria-hidden="true"><path d="M0 0h8L4 4z" fill="#999" /></Glyph>
          </TypePreview>
          <TypeRow>
            <SelectWrap>
              <TypeSelect aria-label="Type filter"><option>Survey Point (1)</option></TypeSelect>
              <Ico s={10} c="#444"><path d="M1 3l4 4 4-4" /></Ico>
            </SelectWrap>
            <EditType>
              <Ico c="#a5a5a5"><path d="M.5 15V2L2 .5h5V7H.5M8 7V2L9.5 .5H14V6M.5 9L2 7.5h5V15H.5" /><path d="M8.5 7.5h7v8h-7zM10 9.5h4M10.5 12.5h3" /></Ico>
              Edit Type
            </EditType>
          </TypeRow>
          <PropertyArea>
            <PropertyTable>
              <colgroup><NameCol /><col /><GutterCol /></colgroup>
              <Group title="Identity Data" rows={IDENTITY} />
              <Group title="Geolocation" rows={GEO} />
            </PropertyTable>
          </PropertyArea>
          <PaletteFooter>
            <HelpLink href="#help">Properties help</HelpLink>
            <ApplyButton>Apply</ApplyButton>
          </PaletteFooter>
          <PaletteHeader>
            <PaletteTitle>Project Browser - 05310007-ARCH_INTR_BSALS_CENTRAL_v2020_det...</PaletteTitle>
            <CloseButton aria-label="Close project browser"><Cross /></CloseButton>
          </PaletteHeader>
          <TreeArea>
            <Tree>
              {VIEWS.map((v, i) => (
                <TreeRow key={v}>
                  <Guide /><Guide /><Guide /><Branch />
                  <TreeLabel $on={i === VIEWS.length - 1}>3D View: {v}</TreeLabel>
                </TreeRow>
              ))}
            </Tree>
            <ScrollTrack>{I.scrollUp}<ScrollThumb /></ScrollTrack>
          </TreeArea>
        </Sidebar>

        <ViewColumn>
          <ViewTabs aria-label="Open views">
            <ViewTab>{I.sheet}zz - Dashboard - INTERIOR MODEL</ViewTab>
            <ViewTab $on><House />DD3 PRESENTATION VIEW 1 (M...<CloseButton aria-label="Close view"><Cross /></CloseButton></ViewTab>
          </ViewTabs>
          <Canvas>
            <Model />
            <Tooltip role="tooltip">Manage positions in this project</Tooltip>
          </Canvas>
        </ViewColumn>
      </Workspace>
    </Window>
  );
}
